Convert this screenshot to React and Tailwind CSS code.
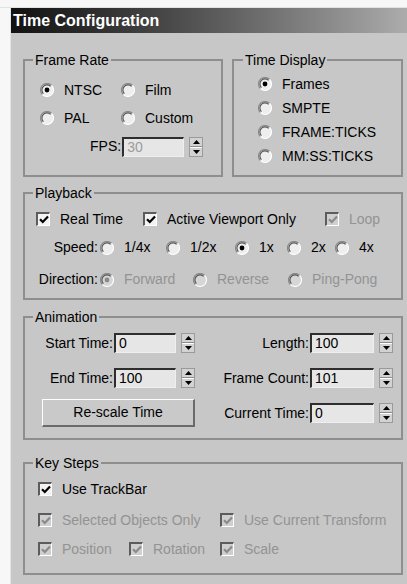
import React from 'react'

// Classic Win9x-style "Time Configuration" dialog

const font = { fontFamily: '"Liberation Sans", Arial, sans-serif' }

function Radio({ checked, disabled }) {
  return (
    <svg width="14" height="14" viewBox="0 0 14 14" className="shrink-0">
      <circle cx="7" cy="7" r="6.5" fill={disabled ? '#d6d6d6' : '#eeeeee'} />
      <path d="M2.4 11.6 A6.5 6.5 0 0 1 11.6 2.4" stroke="#8a8a8a" strokeWidth="1.3" fill="none" />
      <path d="M3.4 10.6 A5 5 0 0 1 10.6 3.4" stroke="#4e4e4e" strokeWidth="1.1" fill="none" />
      <path d="M11.6 2.4 A6.5 6.5 0 0 1 2.4 11.6" stroke="#ffffff" strokeWidth="1.1" fill="none" />
      {checked && <circle cx="7" cy="7" r="2.4" fill={disabled ? '#8a8a8a' : '#000'} />}
    </svg>
  )
}

function Check({ checked, disabled }) {
  return (
    <span
      className={`shrink-0 w-[14px] h-[14px] border-t-2 border-l-2 border-t-[#5c5c5c] border-l-[#5c5c5c] border-b border-r border-b-white border-r-white flex items-center justify-center ${
        disabled ? 'bg-[#cfcfcf]' : 'bg-[#f2f2f2]'
      }`}
    >
      {checked && (
        <svg width="10" height="9" viewBox="0 0 10 9">
          <path
            d="M1 4.2 L3.8 7 L9 1.5"
            stroke={disabled ? '#8a8a8a' : '#000'}
            strokeWidth="2.2"
            fill="none"
          />
        </svg>
      )}
    </span>
  )
}

function Option({ type = 'radio', checked, disabled, label, className = '' }) {
  return (
    <span className={`flex items-center h-[20px] gap-[10px] ${className}`}>
      {type === 'radio' ? (
        <Radio checked={checked} disabled={disabled} />
      ) : (
        <Check checked={checked} disabled={disabled} />
      )}
      <span className={`whitespace-nowrap ${disabled ? 'text-[#939393]' : 'text-black'}`}>{label}</span>
    </span>
  )
}

function Spinner() {
  return (
    <span className="shrink-0 w-[14px] h-[20px] flex flex-col bg-[#d2d2d2] border border-[#9a9a9a]">
      <span className="flex-1 flex items-center justify-center border-b border-b-[#8c8c8c]">
        <svg width="7" height="4" viewBox="0 0 7 4">
          <path d="M0 4 L3.5 0 L7 4 Z" fill="#000" />
        </svg>
      </span>
      <span className="flex-1 flex items-center justify-center border-t border-t-white">
        <svg width="7" height="4" viewBox="0 0 7 4">
          <path d="M0 0 L3.5 4 L7 0 Z" fill="#000" />
        </svg>
      </span>
    </span>
  )
}

function NumField({ label, value, width = 62, disabled }) {
  return (
    <span className="flex items-center">
      <span className="whitespace-nowrap mr-[1px]">{label}</span>
      <span
        className={`h-[20px] flex items-center pl-[3px] border-t-2 border-l-2 border-t-[#2e2e2e] border-l-[#2e2e2e] border-b border-r border-b-[#efefef] border-r-[#efefef] bg-[#e6e6e6] ${
          disabled ? 'text-[#9c9c9c]' : 'text-black'
        }`}
        style={{ width }}
      >
        {value}
      </span>
      <span className="w-[5px]" />
      <Spinner />
    </span>
  )
}

function Group({ title, className = '', legendGap = 8, children }) {
  return (
    <fieldset className={`border-2 border-[#8e8e8e] ${className}`}>
      <legend className="px-[2px] leading-[16px]" style={{ marginLeft: legendGap }}>
        {title}
      </legend>
      {children}
    </fieldset>
  )
}

export default function App() {
  return (
    <div className="w-[407px] h-[584px] bg-[#f7f7f7] text-[14px] text-black overflow-hidden" style={font}>
      <div className="h-[8px] border-b border-b-[#e2e2e2]" />
      <div className="ml-[10px] h-[576px] border-l border-l-[#e4e4e4] flex flex-col">
        {/* title bar */}
        <div className="h-[25px] flex items-center pl-[2px] bg-gradient-to-r from-[#121212] to-[#acacac]">
          <span className="text-white font-bold text-[16px]">Time Configuration</span>
        </div>

        {/* dialog body */}
        <div className="flex-1 bg-[#c7c7c7] pl-[12px] pr-[4px] pt-[19px]">
          <div className="flex gap-[9px]">
            <Group title="Frame Rate" className="w-[200px]">
              <div className="pl-[15px] pt-[12px] pb-[18px] flex flex-col gap-[8px]">
                <div className="flex">
                  <Option checked label="NTSC" className="w-[81px]" />
                  <Option label="Film" />
                </div>
                <div className="flex">
                  <Option label="PAL" className="w-[81px]" />
                  <Option label="Custom" />
                </div>
                <div className="flex pl-[50px]">
                  <NumField label="FPS:" value="30" disabled />
                </div>
              </div>
            </Group>

            <Group title="Time Display" className="w-[171px]" legendGap={9}>
              <div className="pl-[24px] pt-[6px] flex flex-col gap-[4px]">
                <Option checked label="Frames" />
                <Option label="SMPTE" />
                <Option label="FRAME:TICKS" />
                <Option label="MM:SS:TICKS" />
              </div>
            </Group>
          </div>

          <Group title="Playback" className="w-[380px] mt-[8px]">
            <div className="pt-[8px] pb-[8px] flex flex-col">
              <div className="flex pl-[11px]">
                <Option type="check" checked label="Real Time" className="w-[107px]" />
                <Option type="check" checked label="Active Viewport Only" className="w-[182px]" />
                <Option type="check" checked disabled label="Loop" />
              </div>
              <div className="flex items-center mt-[8px]">
                <span className="w-[75px] text-right pr-[2px]">Speed:</span>
                <Option label="1/4x" className="w-[66px] gap-[6px]" />
                <Option label="1/2x" className="w-[69px] gap-[9px]" />
                <Option checked label="1x" className="w-[52px]" />
                <Option label="2x" className="w-[48px] gap-[8px]" />
                <Option label="4x" />
              </div>
              <div className="flex items-center mt-[11px]">
                <span className="w-[75px] text-right pr-[2px]">Direction:</span>
                <Option checked disabled label="Forward" className="w-[93px]" />
                <Option disabled label="Reverse" className="w-[95px]" />
                <Option disabled label="Ping-Pong" />
              </div>
            </div>
          </Group>

          <Group title="Animation" className="w-[380px] mt-[9px]">
            <div className="pt-[4px] pb-[11px] flex">
              <div className="w-[170px] flex flex-col items-end gap-[7px]">
                <div className="h-[28px] flex items-center">
                  <NumField label="Start Time:" value="0" />
                </div>
                <div className="h-[28px] flex items-center">
                  <NumField label="End Time:" value="100" />
                </div>
                <div className="h-[28px] w-[153px] flex items-center justify-center bg-[#c9c9c9] border-t border-l border-t-white border-l-white border-b-2 border-r-2 border-b-[#6a6a6a] border-r-[#6a6a6a]">
                  Re-scale Time
                </div>
              </div>
              <div className="w-[198px] flex flex-col items-end gap-[7px]">
                <div className="h-[28px] flex items-center">
                  <NumField label="Length:" value="100" width={64} />
                </div>
                <div className="h-[28px] flex items-center">
                  <NumField label="Frame Count:" value="101" width={64} />
                </div>
                <div className="h-[28px] flex items-center">
                  <NumField label="Current Time:" value="0" width={64} />
                </div>
              </div>
            </div>
          </Group>

          <Group title="Key Steps" className="w-[380px] mt-[15px]">
            <div className="pl-[13px] pt-[8px] pb-[14px] flex flex-col">
              <Option type="check" checked label="Use TrackBar" />
              <div className="flex mt-[11px]">
                <Option type="check" checked disabled label="Selected Objects Only" className="w-[182px]" />
                <Option type="check" checked disabled label="Use Current Transform" />
              </div>
              <div className="flex mt-[9px]">
                <Option type="check" checked disabled label="Position" className="w-[91px]" />
                <Option type="check" checked disabled label="Rotation" className="w-[91px]" />
                <Option type="check" checked disabled label="Scale" />
              </div>
            </div>
          </Group>
        </div>
      </div>
    </div>
  )
}
